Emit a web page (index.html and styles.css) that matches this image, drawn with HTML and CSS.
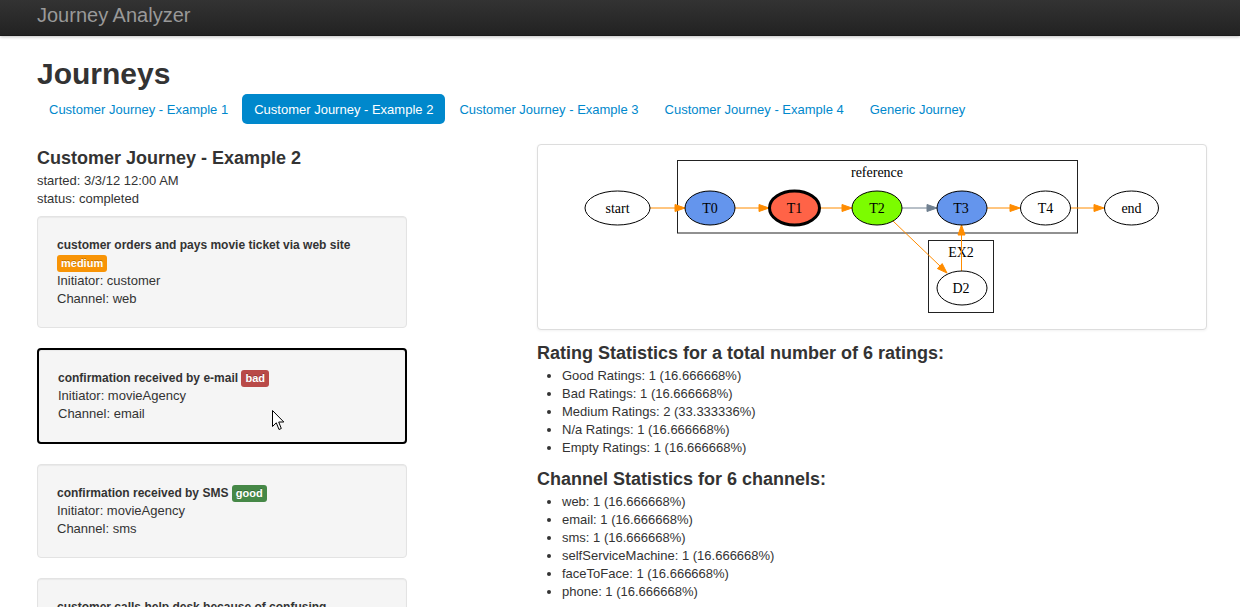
FILE: index.html
```html
<!DOCTYPE html>
<html>
<head>
<meta charset="utf-8">
<title>Journey Analyzer</title>
<link rel="stylesheet" href="styles.css">
</head>
<body>
<div class="navbar">
  <div class="container">
    <span class="brand">Journey Analyzer</span>
  </div>
</div>
<div class="container main">
  <h1>Journeys</h1>
  <ul class="pills">
    <li><a>Customer Journey - Example 1</a></li>
    <li class="active"><a>Customer Journey - Example 2</a></li>
    <li><a>Customer Journey - Example 3</a></li>
    <li><a>Customer Journey - Example 4</a></li>
    <li><a>Generic Journey</a></li>
  </ul>
  <div class="row">
    <div class="left">
      <h3>Customer Journey - Example 2</h3>
      <p class="meta">started: 3/3/12 12:00 AM<br>status: completed</p>
      <div class="well">
        <div class="title">customer orders and pays movie ticket via web site <span class="label warning">medium</span></div>
        <div>Initiator: customer</div>
        <div>Channel: web</div>
      </div>
      <div class="well selected">
        <div class="title">confirmation received by e-mail <span class="label important">bad</span></div>
        <div>Initiator: movieAgency</div>
        <div>Channel: email</div>
        <svg class="cursor" width="13" height="21" viewBox="0 0 13 21"><path d="M0.5 0.5 L0.5 16.5 L4.3 12.8 L7 19.5 L9.3 18.5 L6.7 12 L11.8 12 Z" fill="#fff" stroke="#000" stroke-width="1" stroke-linejoin="miter"/></svg>
      </div>
      <div class="well">
        <div class="title">confirmation received by SMS <span class="label success">good</span></div>
        <div>Initiator: movieAgency</div>
        <div>Channel: sms</div>
      </div>
      <div class="well">
        <div class="title">customer calls help desk because of confusing information <span class="label">n/a</span></div>
        <div>Initiator: customer</div>
        <div>Channel: phone</div>
      </div>
    </div>
    <div class="right">
      <div class="graph">
        <svg width="668" height="184" viewBox="538 145 668 184" font-family="'Liberation Serif', serif" font-size="14">
          <rect x="677.5" y="160.5" width="400" height="72.5" fill="none" stroke="#222" stroke-width="1"/>
          <text x="877" y="176.5" text-anchor="middle">reference</text>
          <rect x="928.5" y="240.5" width="65" height="72" fill="none" stroke="#222" stroke-width="1"/>
          <text x="961" y="256.5" text-anchor="middle">EX2</text>
          <g stroke="#ff8c00" fill="#ff8c00" stroke-width="1">
            <line x1="650" y1="208" x2="675" y2="208"/>
            <polygon points="675,204.5 685,208 675,211.5"/>
            <line x1="735" y1="208" x2="759" y2="208"/>
            <polygon points="759,204.5 769,208 759,211.5"/>
            <line x1="820" y1="208" x2="842" y2="208"/>
            <polygon points="842,204.5 852,208 842,211.5"/>
            <line x1="987" y1="208" x2="1010" y2="208"/>
            <polygon points="1010,204.5 1020,208 1010,211.5"/>
            <line x1="1071" y1="208" x2="1094" y2="208"/>
            <polygon points="1094,204.5 1104,208 1094,211.5"/>
            <line x1="893" y1="221" x2="940" y2="266"/>
            <polygon points="937.4,268.6 947,273 942.2,263.6"/>
            <line x1="961.5" y1="271" x2="961.5" y2="235"/>
            <polygon points="958,235 961.5,225 965,235"/>
          </g>
          <g stroke="#708090" fill="#708090" stroke-width="1">
            <line x1="902" y1="208" x2="927" y2="208"/>
            <polygon points="927,204.5 937,208 927,211.5"/>
          </g>
          <g stroke="#000" stroke-width="1">
            <ellipse cx="617.5" cy="208" rx="32.5" ry="17" fill="#fff"/>
            <ellipse cx="710" cy="208" rx="25" ry="17" fill="#6495ed"/>
            <ellipse cx="794.5" cy="208" rx="25" ry="17" fill="#ff6347" stroke-width="3"/>
            <ellipse cx="877" cy="208" rx="25" ry="17" fill="#7cfc00"/>
            <ellipse cx="962" cy="208" rx="25" ry="17" fill="#6495ed"/>
            <ellipse cx="1045.5" cy="208" rx="25" ry="17" fill="#fff"/>
            <ellipse cx="1131.5" cy="208" rx="27" ry="17" fill="#fff"/>
            <ellipse cx="962" cy="288" rx="25" ry="17" fill="#fff"/>
          </g>
          <g text-anchor="middle" fill="#000">
            <text x="617.5" y="212.5">start</text>
            <text x="710" y="212.5">T0</text>
            <text x="794.5" y="212.5">T1</text>
            <text x="877" y="212.5">T2</text>
            <text x="961" y="212.5">T3</text>
            <text x="1045.5" y="212.5">T4</text>
            <text x="1131.5" y="212.5">end</text>
            <text x="961" y="292.5">D2</text>
          </g>
        </svg>
      </div>
      <h3>Rating Statistics for a total number of 6 ratings:</h3>
      <ul class="stats">
        <li>Good Ratings: 1 (16.666668%)</li>
        <li>Bad Ratings: 1 (16.666668%)</li>
        <li>Medium Ratings: 2 (33.333336%)</li>
        <li>N/a Ratings: 1 (16.666668%)</li>
        <li>Empty Ratings: 1 (16.666668%)</li>
      </ul>
      <h3>Channel Statistics for 6 channels:</h3>
      <ul class="stats">
        <li>web: 1 (16.666668%)</li>
        <li>email: 1 (16.666668%)</li>
        <li>sms: 1 (16.666668%)</li>
        <li>selfServiceMachine: 1 (16.666668%)</li>
        <li>faceToFace: 1 (16.666668%)</li>
        <li>phone: 1 (16.666668%)</li>
      </ul>
    </div>
  </div>
</div>
</body>
</html>
```
FILE: styles.css
```css
* { box-sizing: border-box; }
html, body { margin: 0; padding: 0; }
body {
  font-family: "Liberation Sans", Arial, sans-serif;
  font-size: 13px;
  line-height: 18px;
  color: #333;
  background: #fff;
}
.container {
  width: 1170px;
  margin-left: 37px;
}
.navbar {
  height: 36px;
  background: linear-gradient(#333333, #222222);
  border-bottom: 1px solid #1a1a1a;
  box-shadow: 0 1px 3px rgba(0,0,0,0.25);
}
.brand {
  display: block;
  padding-top: 5px;
  font-size: 20px;
  line-height: 20px;
  color: #999;
}
h1 {
  margin: 20px 0 2px;
  font-size: 30px;
  line-height: 36px;
  font-weight: bold;
  color: #333;
}
.pills {
  list-style: none;
  margin: 0 0 20px;
  padding: 0;
  display: flex;
  gap: 2px;
}
.pills a {
  display: block;
  padding: 9px 12px 7px;
  line-height: 14px;
  color: #0088cc;
  border-radius: 5px;
}
.pills .active a {
  background: #0088cc;
  color: #fff;
}
.row {
  display: grid;
  grid-template-columns: 370px 670px;
  column-gap: 130px;
  align-items: start;
}
h3 {
  margin: 0;
  font-size: 18px;
  line-height: 27px;
  font-weight: bold;
  color: #333;
}
.left { padding-top: 1px; }
.meta { margin: 0 0 8px; }
.well {
  position: relative;
  padding: 19px;
  margin-bottom: 20px;
  background: #f5f5f5;
  border: 1px solid #e3e3e3;
  border-radius: 4px;
  box-shadow: inset 0 1px 1px rgba(0,0,0,0.05);
}
.well.selected {
  border: 2px solid #000;
}
.title {
  font-size: 12px;
  font-weight: bold;
}
.label {
  display: inline-block;
  padding: 1px 4px 2px;
  font-size: 11px;
  line-height: 14px;
  font-weight: bold;
  color: #fff;
  border-radius: 3px;
  background: #999;
  text-shadow: 0 -1px 0 rgba(0,0,0,0.25);
  vertical-align: baseline;
}
.label.warning { background: #f89406; }
.label.important { background: #b94a48; }
.label.success { background: #468847; }
.cursor {
  position: absolute;
  left: 233px;
  top: 60px;
}
.graph {
  height: 186px;
  border: 1px solid #ddd;
  border-radius: 4px;
  box-shadow: 0 1px 3px rgba(0,0,0,0.055);
  margin-bottom: 10px;
  background: #fff;
}
.graph svg { display: block; }
.stats {
  margin: 0 0 9px 25px;
  padding: 0;
  list-style: disc;
}
```
